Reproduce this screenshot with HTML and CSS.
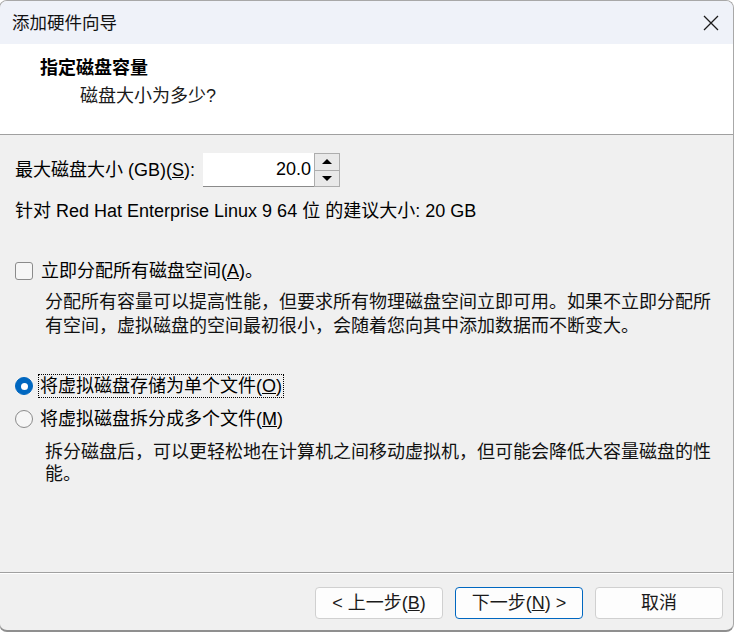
FILE: index.html
```html
<!DOCTYPE html>
<html lang="zh-CN">
<head>
<meta charset="utf-8">
<title>添加硬件向导</title>
<link rel="stylesheet" href="styles.css">
</head>
<body>
<div class="window">
  <div class="titlebar">
    <span class="title">添加硬件向导</span>
    <button class="close" aria-label="关闭">
      <svg width="16" height="16" viewBox="0 0 16 16"><path d="M1 1 L15 15 M15 1 L1 15" stroke="#1b1b1b" stroke-width="1.3" fill="none"/></svg>
    </button>
  </div>
  <div class="header">
    <div class="h-title">指定磁盘容量</div>
    <div class="h-sub">磁盘大小为多少?</div>
  </div>
  <div class="content">
    <div class="size-row">
      <span class="size-label">最大磁盘大小 (GB)(<u>S</u>):</span>
      <div class="spin">
        <div class="spin-value">20.0</div>
        <div class="spin-btns">
          <span class="spin-btn"><span class="arrow-up"></span></span>
          <span class="spin-btn"><span class="arrow-down"></span></span>
        </div>
      </div>
    </div>
    <div class="recommend">针对 Red Hat Enterprise Linux 9 64 位 的建议大小: 20 GB</div>
    <div class="option check-row">
      <span class="checkbox"></span>
      <span class="opt-label">立即分配所有磁盘空间(<u>A</u>)。</span>
    </div>
    <p class="desc desc-1">分配所有容量可以提高性能，但要求所有物理磁盘空间立即可用。如果不立即分配所有空间，虚拟磁盘的空间最初很小，会随着您向其中添加数据而不断变大。</p>
    <div class="option radio-row radio-first">
      <span class="radio checked"></span>
      <span class="opt-label focused">将虚拟磁盘存储为单个文件(<u>O</u>)</span>
    </div>
    <div class="option radio-row radio-second">
      <span class="radio"></span>
      <span class="opt-label plain">将虚拟磁盘拆分成多个文件(<u>M</u>)</span>
    </div>
    <p class="desc desc-2">拆分磁盘后，可以更轻松地在计算机之间移动虚拟机，但可能会降低大容量磁盘的性能。</p>
  </div>
  <div class="footer">
    <button class="btn">&lt; 上一步(<u>B</u>)</button>
    <button class="btn primary">下一步(<u>N</u>) &gt;</button>
    <button class="btn">取消</button>
  </div>
</div>
</body>
</html>
```

FILE: styles.css
```css
* { box-sizing: border-box; }

html, body {
  margin: 0;
  padding: 0;
  background: #ffffff;
}

body {
  font-family: "Liberation Sans", "Noto Sans CJK SC", sans-serif;
  font-size: 18px;
  color: #000;
  width: 737px;
  height: 633px;
  overflow: hidden;
}

.window {
  width: 735px;
  height: 632px;
  margin-left: -1px;
  border: 1px solid #a8a8a8;
  border-bottom: 2px solid #8f8f8f;
  border-radius: 8px;
  overflow: hidden;
  display: flex;
  flex-direction: column;
  background: #f0f0f0;
}

.titlebar {
  height: 43px;
  flex: none;
  display: flex;
  align-items: center;
  background: #eff2f9;
  padding-left: 12px;
}

.title {
  font-size: 17.5px;
  line-height: 24px;
  color: #111;
}

.close {
  margin-left: auto;
  width: 44px;
  height: 43px;
  border: none;
  background: transparent;
  padding: 0;
  display: flex;
  align-items: center;
  justify-content: center;
}

.header {
  height: 91px;
  flex: none;
  background: #ffffff;
  border-bottom: 1px solid #a0a0a0;
  padding-top: 12px;
  padding-left: 40px;
}

.h-title {
  font-weight: bold;
  font-size: 18px;
  line-height: 24px;
}

.h-sub {
  margin-top: 4px;
  padding-left: 40px;
  line-height: 24px;
  color: #1a1a1a;
}

.content {
  flex: 1;
  padding: 18px 14px 0 15px;
}

.size-row {
  display: flex;
  align-items: center;
  height: 34px;
}

.size-label {
  line-height: 24px;
}

.spin {
  margin-left: 8px;
  display: flex;
  height: 34px;
}

.spin-value {
  width: 111px;
  height: 34px;
  background: #ffffff;
  border-bottom: 1px solid #8a8a8a;
  text-align: right;
  padding-right: 3px;
  font-size: 18px;
  line-height: 32px;
}

.spin-btns {
  width: 26px;
  display: flex;
  flex-direction: column;
  border: 1px solid #adadad;
  background: #adadad;
  gap: 1px;
}

.spin-btn {
  flex: 1;
  background: #e9e9e9;
  display: flex;
  align-items: center;
  justify-content: center;
}

.arrow-up {
  width: 0;
  height: 0;
  border-left: 5px solid transparent;
  border-right: 5px solid transparent;
  border-bottom: 5px solid #000;
}

.arrow-down {
  width: 0;
  height: 0;
  border-left: 5px solid transparent;
  border-right: 5px solid transparent;
  border-top: 5px solid #000;
}

.recommend {
  margin-top: 12px;
  line-height: 24px;
}

.option {
  display: flex;
  align-items: center;
  height: 24px;
}

.check-row {
  margin-top: 36px;
}

.checkbox {
  width: 18px;
  height: 18px;
  border: 1px solid #8b8b8b;
  border-radius: 3px;
  background: #f6f6f6;
  margin-right: 8px;
  flex: none;
}

.opt-label {
  line-height: 22px;
}

.desc {
  margin: 7px 0 0 30px;
  font-size: 18px;
  line-height: 24px;
  color: #111;
}

.desc-2 {
  margin-top: 10px;
  line-height: 22px;
}

.radio-first {
  margin-top: 36px;
}

.radio-second {
  margin-top: 9px;
}

.radio {
  width: 18px;
  height: 18px;
  border-radius: 50%;
  border: 1px solid #8b8b8b;
  background: #f6f6f6;
  flex: none;
  margin-right: 5px;
  display: flex;
  align-items: center;
  justify-content: center;
}

.radio.checked {
  background: #0067c0;
  border-color: #0067c0;
}

.radio.checked::after {
  content: "";
  width: 7px;
  height: 7px;
  border-radius: 50%;
  background: #ffffff;
}

.focused {
  border: 1px dotted #000;
  padding: 0 1px;
}

.plain {
  padding-left: 2px;
}

.footer {
  flex: none;
  height: 58px;
  border-top: 1px solid #a0a0a0;
  box-shadow: inset 0 1px 0 #ffffff;
  display: flex;
  justify-content: flex-end;
  gap: 12px;
  padding: 14px 10px 0 0;
}

.btn {
  width: 128px;
  height: 32px;
  background: #fdfdfd;
  border: 1px solid #d0d0d0;
  border-radius: 4px;
  font-family: "Liberation Sans", "Noto Sans CJK SC", sans-serif;
  font-size: 18px;
  color: #1a1a1a;
  padding: 0;
  line-height: 28px;
}

.btn.primary {
  border-color: #0067c0;
}
```
